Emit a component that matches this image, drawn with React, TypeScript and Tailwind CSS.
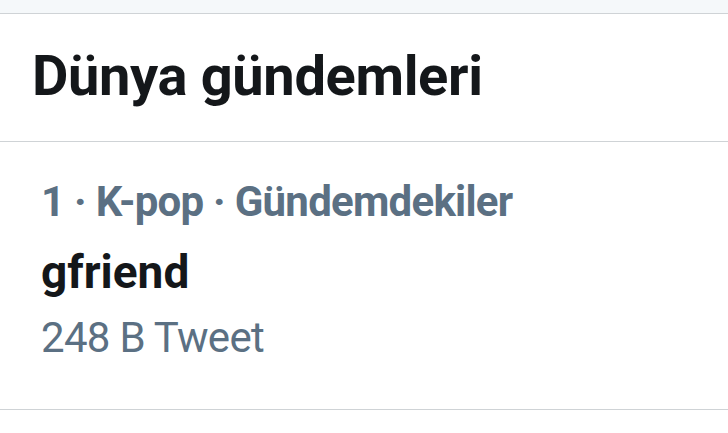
import React from "react";

export default function App() {
  return (
    <div
      className="w-[728px] h-[433px] bg-white overflow-hidden"
      style={{ fontFamily: "Roboto, 'Liberation Sans', sans-serif" }}
    >
      <div className="h-[14px] bg-[#f5f8fa] border-b border-[#cfd3d6]" />
      <div className="pl-[32px] pt-[35px] pb-[37px] border-b border-[#cfd3d6]">
        <div className="text-[56px] leading-[55px] font-bold text-[#14171a] tracking-[-0.35px]">
          Dünya gündemleri
        </div>
      </div>
      <div className="pl-[41px] pt-[39px] pb-[50px] border-b border-[#cfd3d6]">
        <div className="text-[42px] leading-[42px] font-bold text-[#5b7083] tracking-[-0.75px]">
          1 · K-pop · Gündemdekiler
        </div>
        <div className="mt-[27px] text-[46px] leading-[44px] font-bold text-[#14171a]">
          gfriend
        </div>
        <div className="mt-[23px] text-[42px] leading-[42px] text-[#5b7083] tracking-[-0.7px]">
          248 B Tweet
        </div>
      </div>
    </div>
  );
}
